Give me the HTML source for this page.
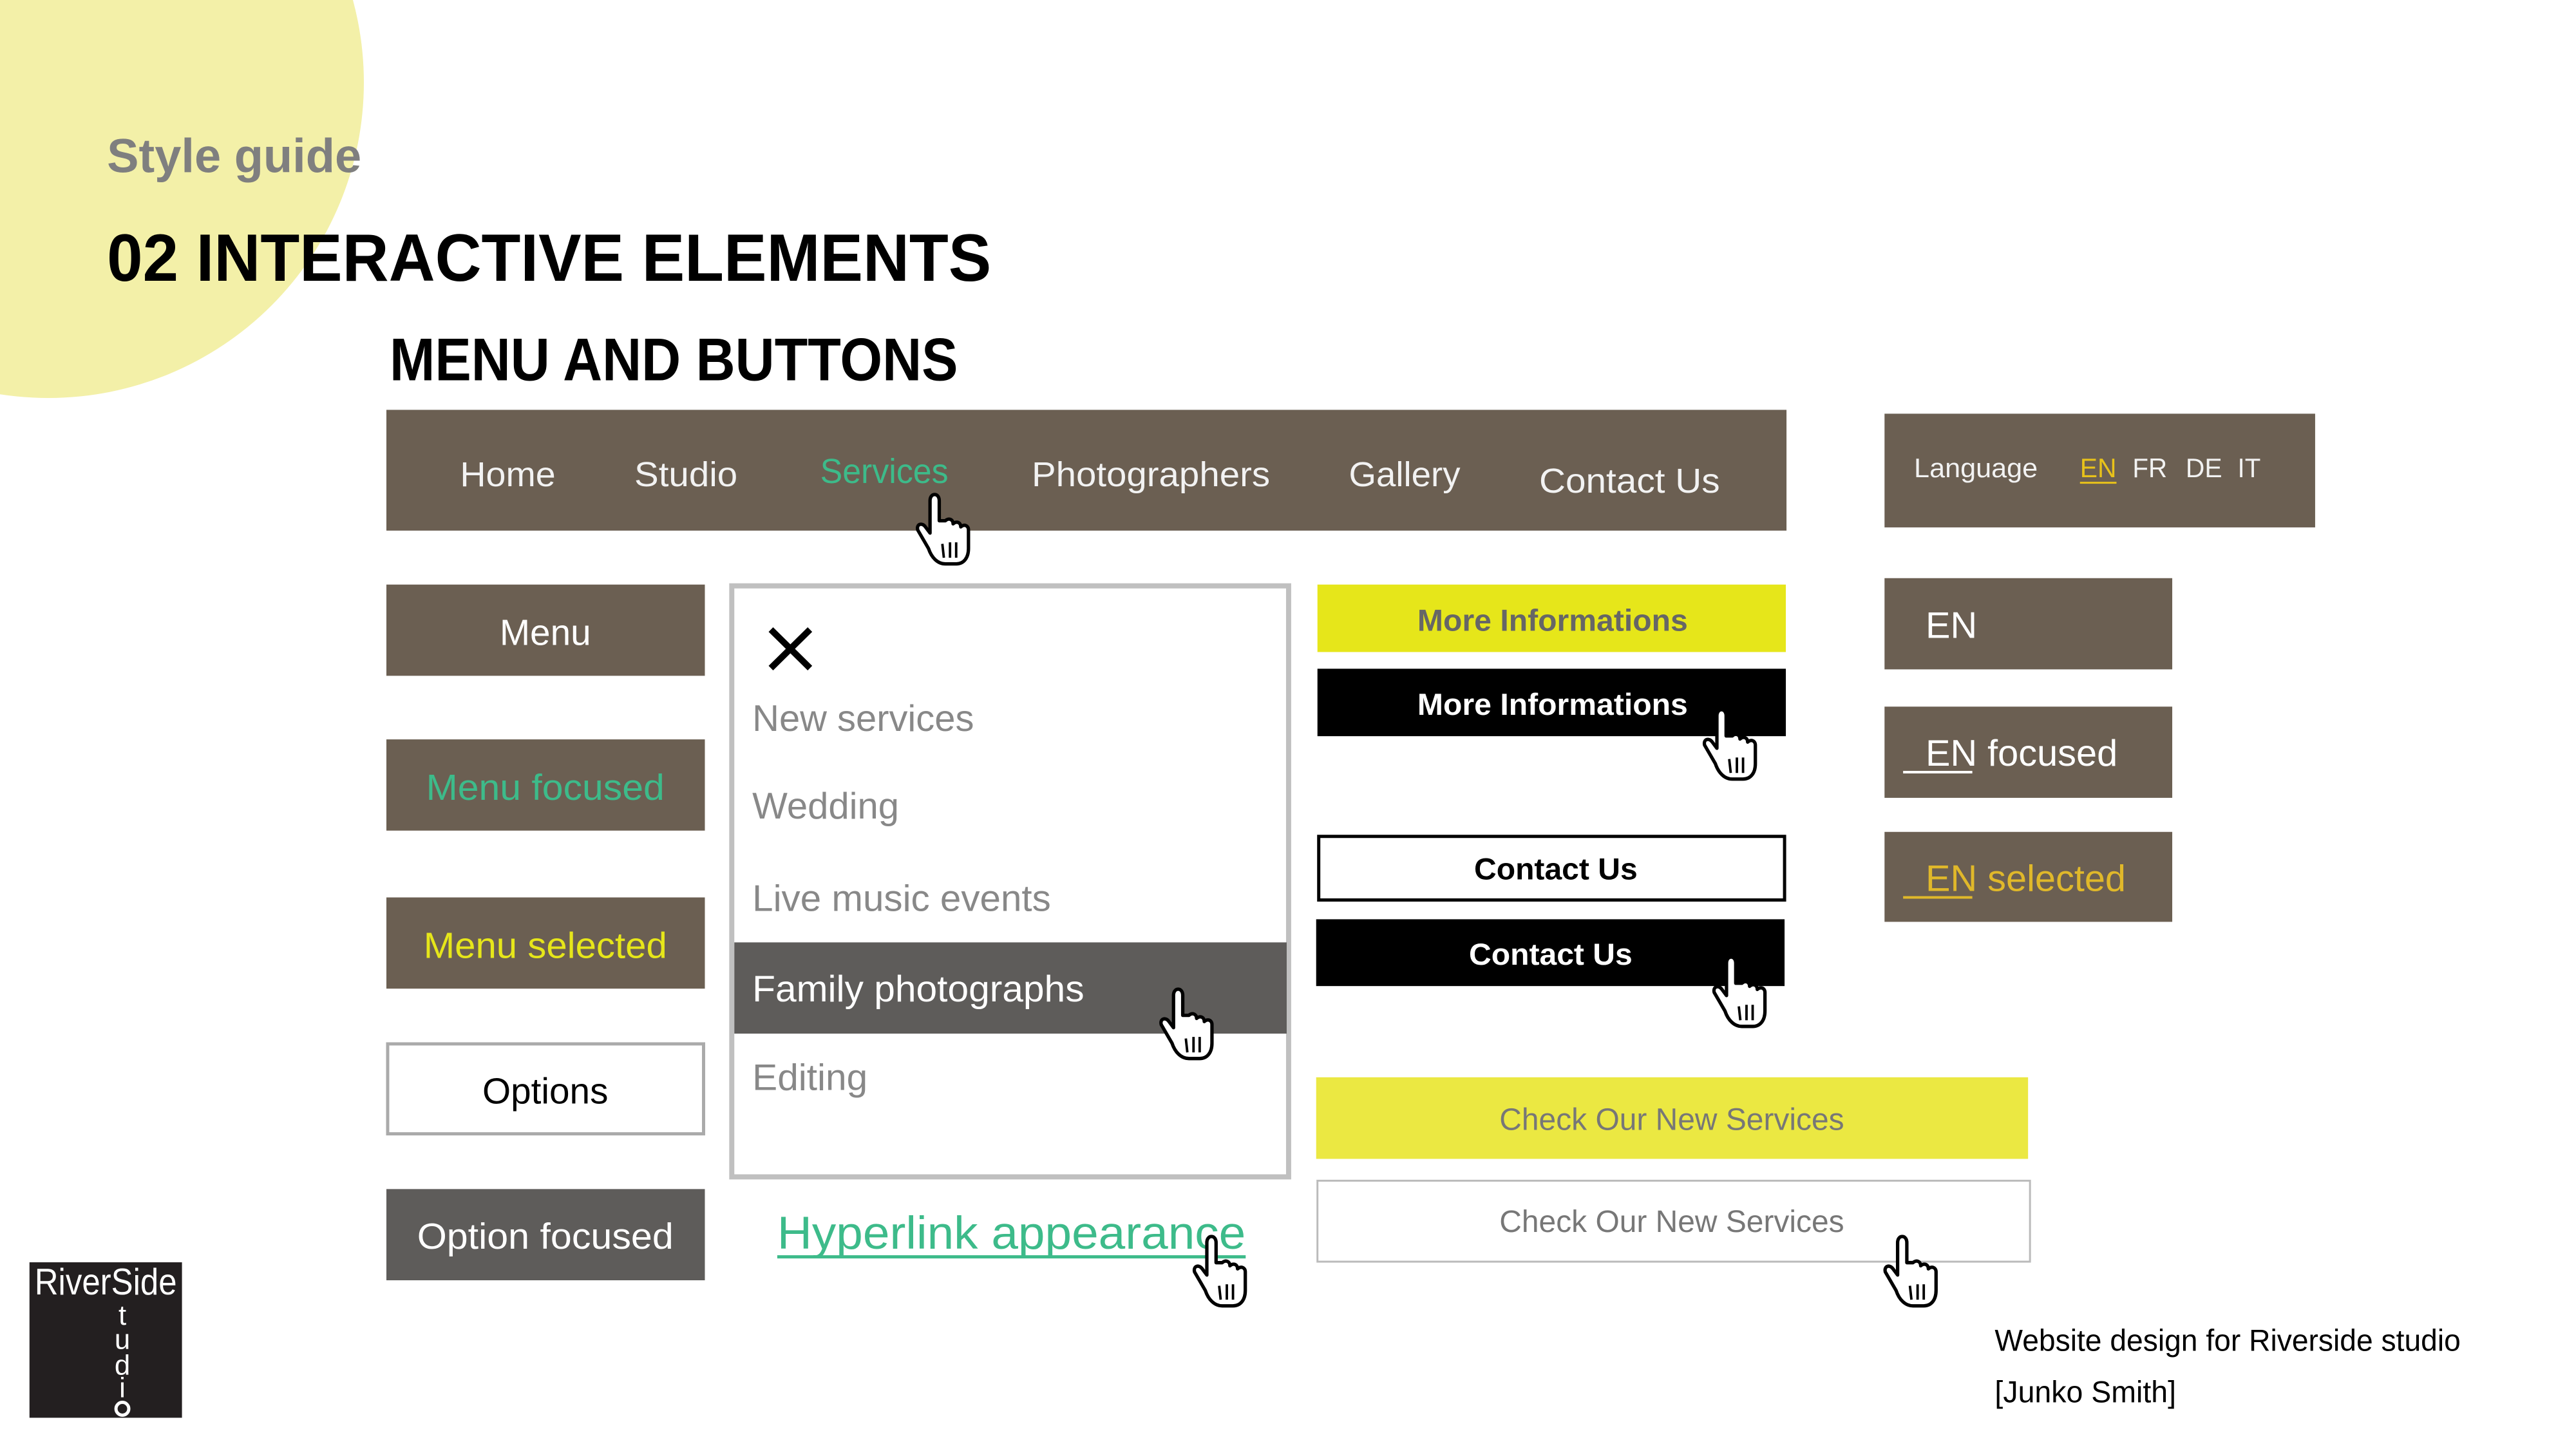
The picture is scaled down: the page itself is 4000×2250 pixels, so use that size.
<!DOCTYPE html>
<html><head><meta charset="utf-8"><style>html,body{margin:0;padding:0;background:#fff;width:4000px;height:2250px;overflow:hidden}svg{display:block}text{font-family:"Liberation Sans",sans-serif}</style></head><body>
<svg width="4000" height="2250" viewBox="0 0 4000 2250" xmlns="http://www.w3.org/2000/svg">
<defs>
<g id="hand">
<path d="M14 2 C12 2 11 4 11 6 L11 27 L8 23 C6 20 2 21 3 25 L10 37 C12 43 16 47 21 47 L28 47 C33 47 36 43 36 37 L36 25 C36 22 33 21 31 23 C31 20 28 19 26 21 C26 18 23 17 21 19 L17 19 L17 6 C17 4 16 2 14 2 Z" fill="#fff" stroke="#000" stroke-width="2.2" stroke-linejoin="round"/>
<path d="M19 34 L20 43 M24 33 L24 43 M28 33 L28 43" stroke="#000" stroke-width="1.6" fill="none"/>
</g>
</defs>
<circle cx="75" cy="128" r="490" fill="#f3f0a8"/>
<g transform="scale(0.995,0.9975)">
<text x="167" y="268" font-size="74" font-weight="bold" fill="#7f7f7f" textLength="397" lengthAdjust="spacingAndGlyphs">Style guide</text>
<text x="167" y="437" font-size="104" font-weight="bold" fill="#000" textLength="1380" lengthAdjust="spacingAndGlyphs">02 INTERACTIVE ELEMENTS</text>
<text x="608" y="592" font-size="94" font-weight="bold" fill="#000" textLength="887" lengthAdjust="spacingAndGlyphs">MENU AND BUTTONS</text>

<rect x="603" y="638" width="2185" height="188" fill="#6b5f52"/>
<g font-size="54" fill="#f2f2f2">
<text x="718" y="757" textLength="149" lengthAdjust="spacingAndGlyphs">Home</text>
<text x="990" y="757" textLength="161" lengthAdjust="spacingAndGlyphs">Studio</text>
<text x="1280" y="752" fill="#3dbb8a" textLength="200" lengthAdjust="spacingAndGlyphs">Services</text>
<text x="1610" y="757" textLength="372" lengthAdjust="spacingAndGlyphs">Photographers</text>
<text x="2105" y="757" textLength="174" lengthAdjust="spacingAndGlyphs">Gallery</text>
<text x="2402" y="767" textLength="282" lengthAdjust="spacingAndGlyphs">Contact Us</text>
</g>

<rect x="2941" y="644" width="672" height="177" fill="#6b5f52"/>
<g font-size="42" fill="#f2f2f2">
<text x="2987" y="743" textLength="193" lengthAdjust="spacingAndGlyphs">Language</text>
<text x="3246" y="743" fill="#e8c21a" textLength="57" lengthAdjust="spacingAndGlyphs">EN</text>
<rect x="3246" y="750" width="57" height="3" fill="#e8c21a"/>
<text x="3328" y="743" textLength="54" lengthAdjust="spacingAndGlyphs">FR</text>
<text x="3411" y="743" textLength="57" lengthAdjust="spacingAndGlyphs">DE</text>
<text x="3492" y="743" textLength="36" lengthAdjust="spacingAndGlyphs">IT</text>
</g>

<g font-size="57" text-anchor="middle">
<rect x="603" y="910" width="497" height="142" fill="#6b5f52"/>
<text x="851" y="1004" fill="#fff">Menu</text>
<rect x="603" y="1151" width="497" height="142" fill="#6b5f52"/>
<text x="851" y="1245" fill="#3dbb8a" textLength="372" lengthAdjust="spacingAndGlyphs">Menu focused</text>
<rect x="603" y="1397" width="497" height="142" fill="#6b5f52"/>
<text x="851" y="1491" fill="#e6e61a" textLength="380" lengthAdjust="spacingAndGlyphs">Menu selected</text>
<rect x="605" y="1625" width="493" height="140" fill="#fff" stroke="#aaa" stroke-width="5"/>
<text x="851" y="1718" fill="#000">Options</text>
<rect x="603" y="1851" width="497" height="142" fill="#5e5c5a"/>
<text x="851" y="1944" fill="#fff" textLength="400" lengthAdjust="spacingAndGlyphs">Option focused</text>
</g>

<rect x="1142" y="912" width="869" height="920" fill="#fff" stroke="#c0c0c0" stroke-width="8"/>
<path d="M1203 980 L1264 1040 M1264 980 L1203 1040" stroke="#000" stroke-width="10"/>
<g font-size="58" fill="#888">
<text x="1174" y="1138" textLength="346" lengthAdjust="spacingAndGlyphs">New services</text>
<text x="1174" y="1274" textLength="229" lengthAdjust="spacingAndGlyphs">Wedding</text>
<text x="1174" y="1418" textLength="466" lengthAdjust="spacingAndGlyphs">Live music events</text>
<rect x="1146" y="1467" width="862" height="142" fill="#5e5c5a"/>
<text x="1174" y="1559" fill="#fff" textLength="518" lengthAdjust="spacingAndGlyphs">Family photographs</text>
<text x="1174" y="1697" textLength="180" lengthAdjust="spacingAndGlyphs">Editing</text>
</g>
<text x="1213" y="1944" font-size="72" fill="#3dbb8a" textLength="731" lengthAdjust="spacingAndGlyphs">Hyperlink appearance</text>
<rect x="1213" y="1954" width="731" height="5" fill="#3dbb8a"/>

<g font-size="47" font-weight="bold" text-anchor="middle">
<rect x="2056" y="910" width="731" height="105" fill="#e6e61a"/>
<text x="2423" y="982" fill="#666" textLength="422" lengthAdjust="spacingAndGlyphs">More Informations</text>
<rect x="2056" y="1041" width="731" height="105" fill="#000"/>
<text x="2423" y="1113" fill="#fff" textLength="422" lengthAdjust="spacingAndGlyphs">More Informations</text>
<rect x="2058" y="1302" width="727" height="99" fill="#fff" stroke="#000" stroke-width="5"/>
<text x="2428" y="1369" fill="#000" textLength="255" lengthAdjust="spacingAndGlyphs">Contact Us</text>
<rect x="2054" y="1431" width="731" height="104" fill="#000"/>
<text x="2420" y="1502" fill="#fff" textLength="255" lengthAdjust="spacingAndGlyphs">Contact Us</text>
</g>
<g font-size="48" fill="#777" text-anchor="middle">
<rect x="2054" y="1677" width="1111" height="127" fill="#ebe842"/>
<text x="2609" y="1759" textLength="538" lengthAdjust="spacingAndGlyphs">Check Our New Services</text>
<rect x="2056" y="1838" width="1112" height="126" fill="#fff" stroke="#bbb" stroke-width="3"/>
<text x="2609" y="1918" textLength="538" lengthAdjust="spacingAndGlyphs">Check Our New Services</text>
</g>

<g font-size="58" fill="#fff">
<rect x="2941" y="900" width="449" height="142" fill="#6b5f52"/>
<text x="3005" y="993">EN</text>
<rect x="2941" y="1100" width="449" height="142" fill="#6b5f52"/>
<text x="3005" y="1192">EN focused</text>
<rect x="2970" y="1200" width="108" height="4" fill="#fff"/>
<rect x="2941" y="1295" width="449" height="140" fill="#6b5f52"/>
<text x="3005" y="1387" fill="#e0b82a">EN selected</text>
<rect x="2970" y="1395" width="108" height="4" fill="#e0b82a"/>
</g>

<text x="3113" y="2103" font-size="47" fill="#000" textLength="727" lengthAdjust="spacingAndGlyphs">Website design for Riverside studio</text>
<text x="3113" y="2183" font-size="47" fill="#000" textLength="283" lengthAdjust="spacingAndGlyphs">[Junko Smith]</text>

<rect x="46" y="1965" width="238" height="242" fill="#231f20"/>
<text x="54" y="2015" font-size="58" fill="#fff" textLength="222" lengthAdjust="spacingAndGlyphs">RiverSide</text>
<g font-size="44" fill="#fff" text-anchor="middle">
<text x="191" y="2062">t</text>
<text x="191" y="2100">u</text>
<text x="191" y="2140">d</text>
<text x="191" y="2175">i</text>
</g>
<circle cx="191" cy="2193" r="10" fill="none" stroke="#fff" stroke-width="5"/>

<use href="#hand" transform="translate(1425,765) scale(2.4)"/>
<use href="#hand" transform="translate(1805,1535) scale(2.4)"/>
<use href="#hand" transform="translate(1857,1920) scale(2.4)"/>
<use href="#hand" transform="translate(2653,1100) scale(2.4)"/>
<use href="#hand" transform="translate(2668,1485) scale(2.4)"/>
<use href="#hand" transform="translate(2935,1920) scale(2.4)"/>
</g>
</svg>
</body></html>
